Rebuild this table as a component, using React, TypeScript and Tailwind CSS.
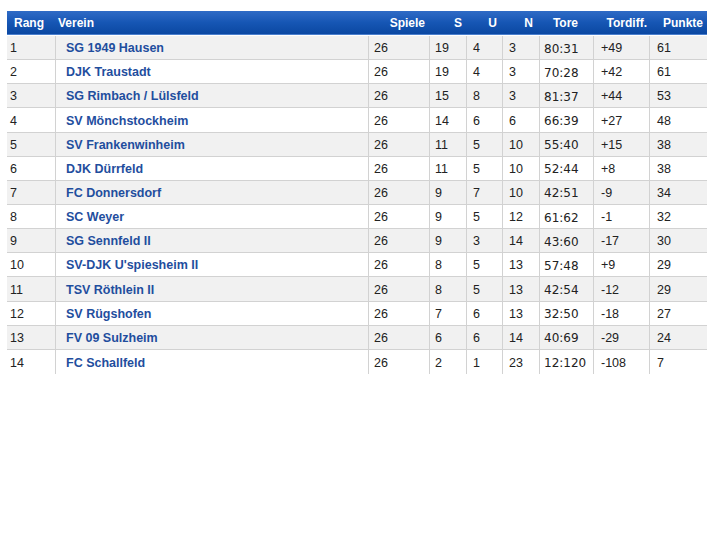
const rows: [number, string, number, number, number, number, string, string, number][] = [
  [1, "SG 1949 Hausen", 26, 19, 4, 3, "80:31", "+49", 61],
  [2, "DJK Traustadt", 26, 19, 4, 3, "70:28", "+42", 61],
  [3, "SG Rimbach / Lülsfeld", 26, 15, 8, 3, "81:37", "+44", 53],
  [4, "SV Mönchstockheim", 26, 14, 6, 6, "66:39", "+27", 48],
  [5, "SV Frankenwinheim", 26, 11, 5, 10, "55:40", "+15", 38],
  [6, "DJK Dürrfeld", 26, 11, 5, 10, "52:44", "+8", 38],
  [7, "FC Donnersdorf", 26, 9, 7, 10, "42:51", "-9", 34],
  [8, "SC Weyer", 26, 9, 5, 12, "61:62", "-1", 32],
  [9, "SG Sennfeld II", 26, 9, 3, 14, "43:60", "-17", 30],
  [10, "SV-DJK U'spiesheim II", 26, 8, 5, 13, "57:48", "+9", 29],
  [11, "TSV Röthlein II", 26, 8, 5, 13, "42:54", "-12", 29],
  [12, "SV Rügshofen", 26, 7, 6, 13, "32:50", "-18", 27],
  [13, "FV 09 Sulzheim", 26, 6, 6, 14, "40:69", "-29", 24],
  [14, "FC Schallfeld", 26, 2, 1, 23, "12:120", "-108", 7],
];

const cell = "flex items-center pt-[2px] border-l border-[#d2d2d2]";

export default function App() {
  return (
    <div className="w-[720px] h-[540px] bg-white pt-[11px] pl-[7px] font-['Liberation_Sans',Arial,sans-serif] text-[12.5px] text-[#222]">
      <div className="w-[700px]">
        <div className="flex h-[24px] items-center pl-[7px] pr-[4px] text-[12px] font-bold text-white bg-gradient-to-b from-[#2f6bc6] via-[#1656b4] to-[#0b48a2] border-b border-[#4a7fce]">
          <div className="w-[44px]">Rang</div>
          <div className="w-[307px]">Verein</div>
          <div className="w-[60px] text-right">Spiele</div>
          <div className="w-[37px] text-right">S</div>
          <div className="w-[35px] text-right">U</div>
          <div className="w-[36px] text-right">N</div>
          <div className="w-[45px] text-right">Tore</div>
          <div className="w-[69px] text-right">Tordiff.</div>
          <div className="w-[56px] text-right">Punkte</div>
        </div>
        <div className="h-px bg-white" />
        {rows.map((r, i) => (
          <div
            key={r[0]}
            className={`grid grid-cols-[48px_313px_61px_37px_36px_37px_54px_56px_58px] h-[24.15px] ${
              i === rows.length - 1 ? "" : "border-b border-[#d2d2d2]"
            } ${i % 2 === 0 ? "bg-[#f1f1f1]" : "bg-white"}`}
          >
            <div className="flex items-center pt-[2px] pl-[3px]">{r[0]}</div>
            <div className={`${cell} pl-[10px] font-bold text-[#1f4e9e]`}>{r[1]}</div>
            <div className={`${cell} pl-[5px]`}>{r[2]}</div>
            <div className={`${cell} pl-[5px]`}>{r[3]}</div>
            <div className={`${cell} pl-[6px]`}>{r[4]}</div>
            <div className={`${cell} pl-[6px]`}>{r[5]}</div>
            <div className={`${cell} pl-[4px] font-['DejaVu_Sans',Verdana,sans-serif] text-[12px]`}>{r[6]}</div>
            <div className={`${cell} pl-[7px]`}>{r[7]}</div>
            <div className={`${cell} pl-[7px]`}>{r[8]}</div>
          </div>
        ))}
      </div>
    </div>
  );
}
